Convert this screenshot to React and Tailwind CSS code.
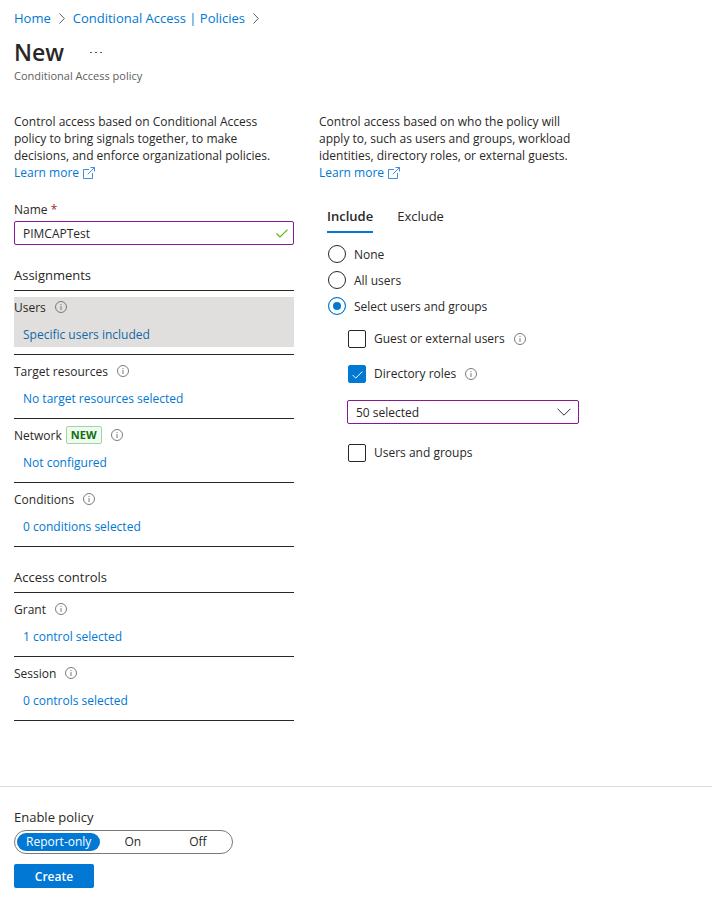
import { useState } from 'react'

const assignments = [
  { label: 'Users', value: 'Specific users included', selected: true },
  { label: 'Target resources', value: 'No target resources selected' },
  { label: 'Network', value: 'Not configured', isNew: true },
  { label: 'Conditions', value: '0 conditions selected' },
]

const accessControls = [
  { label: 'Grant', value: '1 control selected' },
  { label: 'Session', value: '0 controls selected' },
]

function InfoIcon() {
  return (
    <svg className="w-3 h-3 shrink-0" viewBox="0 0 12 12" fill="none" stroke="#6e6c6a" aria-hidden="true">
      <circle cx="6" cy="6" r="5.5" strokeWidth="0.9" />
      <path d="M6 5v4M6 3v1" strokeWidth="0.9" />
    </svg>
  )
}

function CheckIcon({ className }) {
  return (
    <svg className={className} viewBox="0 0 12 9" fill="none" stroke="currentColor" strokeWidth="1.1" aria-hidden="true">
      <path d="M0.5 4.5 4 8 11.5 0.6" />
    </svg>
  )
}

function Chevron() {
  return (
    <svg className="w-[6px] h-[11px]" viewBox="0 0 6 11" fill="none" stroke="#605e5c" aria-hidden="true">
      <path d="M0.5 0.5 5.3 5.5 0.5 10.5" />
    </svg>
  )
}

function LearnMore() {
  return (
    <a href="#" className="inline-flex items-center gap-1 text-[#0078d4]">
      Learn more
      <svg className="w-3 h-3" viewBox="0 0 12 12" fill="none" stroke="#2f7fe0" strokeWidth="0.9" aria-hidden="true">
        <path d="M6 2.5H0.5v9h9V6M7.5 0.5h4v4M11.5 0.5 4.8 7.2" />
      </svg>
    </a>
  )
}

function SectionHeading({ children }) {
  return (
    <h2 className="pt-5 pb-[5px] leading-5 text-[13px] border-b border-[#292827]">{children}</h2>
  )
}

function PolicyRow({ label, value, selected, isNew }) {
  return (
    <div className="pt-[6px] pb-[7px] border-b border-[#292827]">
      <div className={selected ? 'pb-[3px] bg-[#e1dfdd]' : 'pb-[3px]'}>
        <div className="flex items-center h-5">
          <span>{label}</span>
          {isNew && (
            <span className="ml-1 px-1 leading-4 text-[11px] font-bold text-[#0e700e] bg-[#f1faf1] border border-[#9fd89f] rounded-xs">
              NEW
            </span>
          )}
          <span className="ml-[9px]">
            <InfoIcon />
          </span>
        </div>
        <a
          href="#"
          className={selected ? 'block mt-[9px] pl-[9px] leading-[18px] text-[#1267a8]' : 'block mt-[9px] pl-[9px] leading-[18px] text-[#0078d4]'}
        >
          {value}
        </a>
      </div>
    </div>
  )
}

function Radio({ label, checked, onChange }) {
  return (
    <label className="flex items-center gap-2 h-[26px]">
      <input
        type="radio"
        name="user-scope"
        checked={checked}
        onChange={onChange}
        className="ml-px w-[18px] h-[18px] appearance-none rounded-full border border-[#292827]
          checked:border-[#0078d4] checked:bg-[#0078d4] checked:shadow-[inset_0_0_0_4px_white]"
      />
      {label}
    </label>
  )
}

function Checkbox({ label, info, defaultChecked }) {
  return (
    <label className="flex items-center h-[18px]">
      <span className="relative ml-px w-[18px] h-[18px]">
        <input
          type="checkbox"
          defaultChecked={defaultChecked}
          className="peer block w-[18px] h-[18px] appearance-none rounded-xs border border-[#292827]
            checked:border-[#0078d4] checked:bg-[#0078d4]"
        />
        <CheckIcon className="absolute left-1 top-[6px] w-[11px] h-[8px] text-white hidden peer-checked:block pointer-events-none" />
      </span>
      <span className="ml-2 leading-4">{label}</span>
      {info && (
        <span className="ml-[9px]">
          <InfoIcon />
        </span>
      )}
    </label>
  )
}

export default function App() {
  const [name, setName] = useState('PIMCAPTest')
  const [tab, setTab] = useState('Include')
  const [scope, setScope] = useState('Select users and groups')
  const [mode, setMode] = useState('Report-only')

  return (
    <div className="bg-white text-[#292827] text-[12px] leading-[17px] font-['Segoe_UI','Open_Sans',sans-serif]">
      <header className="px-[14px] pt-2">
        <nav className="flex items-center gap-2 h-5 text-[13px] text-[#0078d4]">
          <a href="#">Home</a>
          <Chevron />
          <a href="#">Conditional Access | Policies</a>
          <Chevron />
        </nav>
        <div className="flex items-center gap-[26px] h-8 mt-2">
          <h1 className="text-[23px] font-semibold">New</h1>
          <button type="button" aria-label="More" className="flex gap-[3px]">
            <span className="w-[2px] h-px bg-[#605e5c]" />
            <span className="w-[2px] h-px bg-[#605e5c]" />
            <span className="w-[2px] h-px bg-[#605e5c]" />
          </button>
        </div>
        <p className="text-[11px] leading-4 text-[#605e5c]">Conditional Access policy</p>
      </header>

      <main className="grid grid-cols-[280px_minmax(0,1fr)] gap-[25px] px-[14px] mt-[29px]">
        <section>
          <p className="pr-2">
            Control access based on Conditional Access policy to bring signals together, to make
            decisions, and enforce organizational policies.
          </p>
          <LearnMore />

          <label htmlFor="policy-name" className="block mt-5">
            Name <span className="text-[#a4262c]">*</span>
          </label>
          <div className="relative mt-[3px]">
            <input
              id="policy-name"
              value={name}
              onChange={(e) => setName(e.target.value)}
              className="block w-full h-6 pl-2 pr-7 border border-[#881798] rounded-xs outline-none"
            />
            <CheckIcon className="absolute right-[6px] top-2 w-3 h-[9px] text-[#5db300] pointer-events-none" />
          </div>

          <SectionHeading>Assignments</SectionHeading>
          {assignments.map((row) => (
            <PolicyRow key={row.label} {...row} />
          ))}

          <SectionHeading>Access controls</SectionHeading>
          {accessControls.map((row) => (
            <PolicyRow key={row.label} {...row} />
          ))}
        </section>

        <section>
          <p className="max-w-[265px]">
            Control access based on who the policy will apply to, such as users and groups, workload
            identities, directory roles, or external guests.
          </p>
          <LearnMore />

          <div className="pl-2">
            <div role="tablist" className="flex gap-6 mt-5 text-[13px]">
              {['Include', 'Exclude'].map((item) => (
                <button
                  key={item}
                  type="button"
                  role="tab"
                  aria-selected={tab === item}
                  onClick={() => setTab(item)}
                  className={
                    tab === item
                      ? 'h-8 border-b-2 border-[#0078d4] font-semibold'
                      : 'h-8 border-b-2 border-transparent'
                  }
                >
                  {item}
                </button>
              ))}
            </div>

            <div className="mt-2">
              {['None', 'All users', 'Select users and groups'].map((item) => (
                <Radio key={item} label={item} checked={scope === item} onChange={() => setScope(item)} />
              ))}
            </div>

            <div className="flex flex-col gap-[17px] mt-[11px] pl-5">
              <Checkbox label="Guest or external users" info />
              <Checkbox label="Directory roles" info defaultChecked />
              <div className="relative w-full max-w-[232px] mb-[3px]">
                <select
                  aria-label="Directory roles"
                  className="block w-full h-6 pl-2 pr-8 appearance-none bg-white border border-[#881798] rounded-xs outline-none"
                >
                  <option>50 selected</option>
                </select>
                <svg
                  className="absolute right-2 top-2 w-[14px] h-2 pointer-events-none"
                  viewBox="0 0 14 8"
                  fill="none"
                  stroke="#323130"
                  aria-hidden="true"
                >
                  <path d="M0.6 0.8 7 7.2 13.4 0.8" />
                </svg>
              </div>
              <Checkbox label="Users and groups" />
            </div>
          </div>
        </section>
      </main>

      <footer className="mt-[65px] px-[14px] pt-5 pb-4 border-t border-[#dcdcdc]">
        <fieldset>
          <legend className="leading-5 text-[13px]">Enable policy</legend>
          <div className="inline-flex items-center mt-[3px] h-6 p-[2px] border border-[#7a7876] rounded-full">
            {['Report-only', 'On', 'Off'].map((item) => (
              <label
                key={item}
                className="px-[9px] min-w-[65px] h-[18px] leading-[18px] text-center rounded-full
                  has-checked:bg-[#0078d4] has-checked:text-white"
              >
                <input
                  type="radio"
                  name="enable-policy"
                  checked={mode === item}
                  onChange={() => setMode(item)}
                  className="sr-only"
                />
                {item}
              </label>
            ))}
          </div>
        </fieldset>
        <button type="button" className="block mt-[10px] w-20 h-6 bg-[#0078d4] text-white font-semibold rounded-xs">
          Create
        </button>
      </footer>
    </div>
  )
}
